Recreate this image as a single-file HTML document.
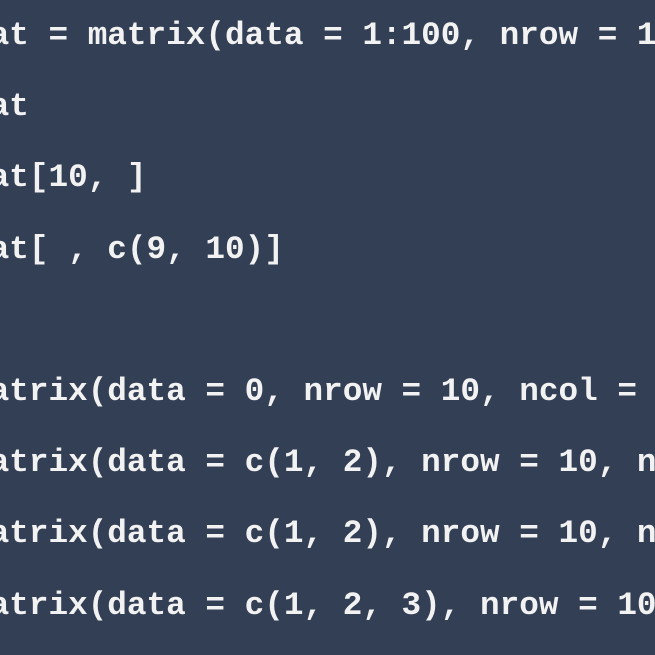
<!DOCTYPE html>
<html><head><style>
html,body{margin:0;width:655px;height:655px;overflow:hidden;background:#333f54;}
#c{position:relative;width:655px;height:655px;overflow:hidden;}
pre{position:absolute;left:-30px;top:0;margin:0;font-family:"Liberation Mono",monospace;font-weight:bold;font-size:32.7px;line-height:71.2px;color:#f2f2f2;white-space:pre;}
</style></head><body>
<div id="c"><pre>mat = matrix(data = 1:100, nrow = 1
mat
mat[10, ]
mat[ , c(9, 10)]

matrix(data = 0, nrow = 10, ncol =
matrix(data = c(1, 2), nrow = 10, n
matrix(data = c(1, 2), nrow = 10, n
matrix(data = c(1, 2, 3), nrow = 10</pre></div>
</body></html>
